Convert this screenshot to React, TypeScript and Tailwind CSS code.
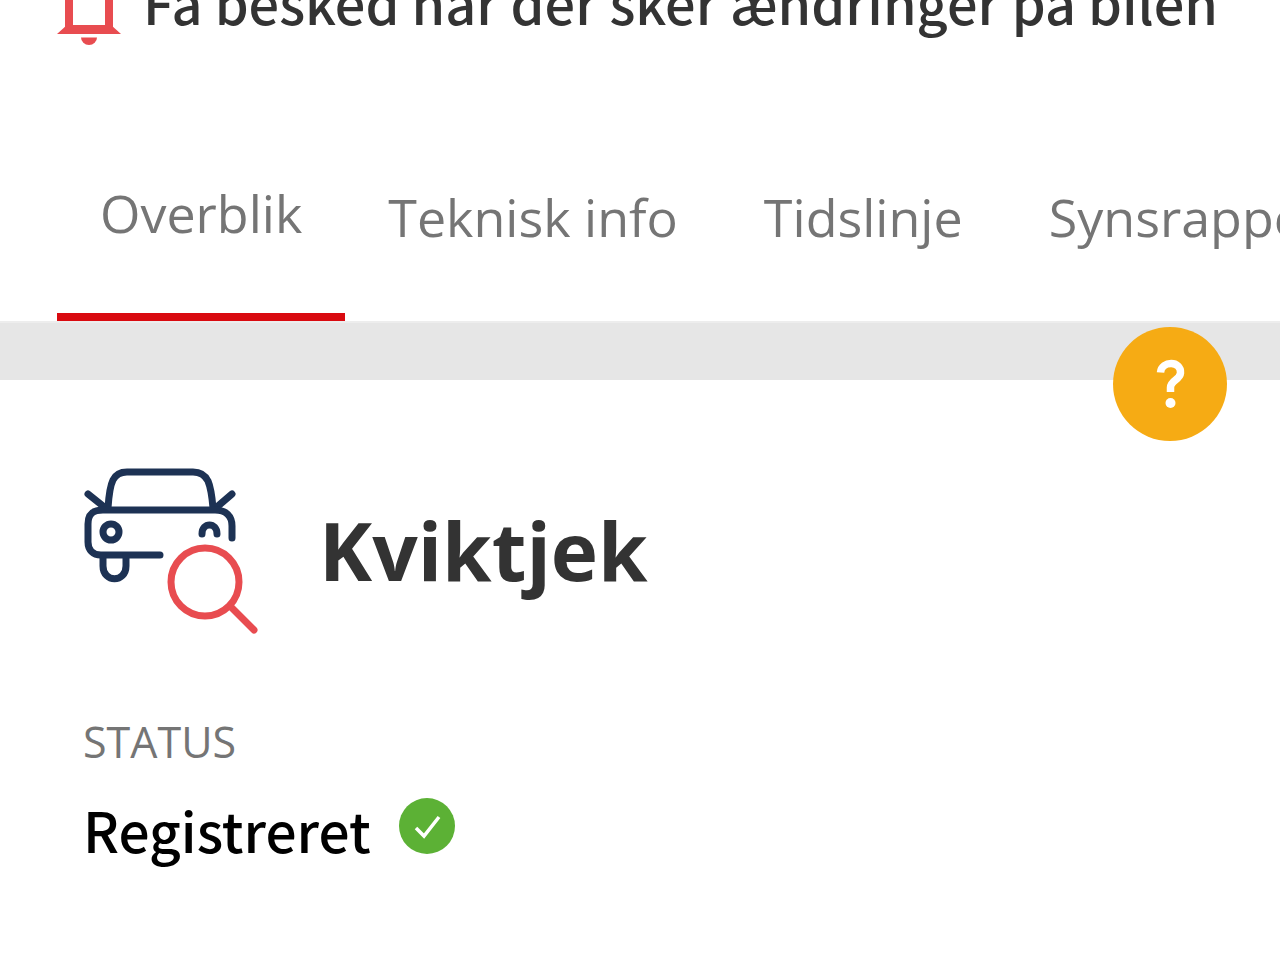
const tabs = ['Overblik', 'Teknisk info', 'Tidslinje', 'Synsrapporter'];

function BellIcon() {
  return (
    <svg className="h-[72px] w-16 shrink-0" viewBox="0 0 64 72" fill="none" aria-hidden="true">
      <path d="M12 54V24a20 20 0 0 1 40 0v30" stroke="#e84c50" strokeWidth="8" />
      <path d="M10 52h44l10 9H0z" fill="#e84c50" />
      <path d="M24 64.500h16a8 7.500 0 0 1-16 0z" fill="#e84c50" />
    </svg>
  );
}

function CarSearchIcon() {
  return (
    <svg className="h-[168px] w-44 shrink-0" viewBox="0 0 176 168" fill="none" strokeWidth="7" strokeLinecap="round" strokeLinejoin="round" aria-hidden="true">
      <g stroke="#1d3254">
        <path d="M25 42C26 27 27 20 30 14C33 8 38 6 44 6H110C117 6 122 9 125 15C128 22 129 30 130 42" />
        <path d="M5 28L20 40M149 28L135 40" />
        <path d="M77 89H18C10 89 5 84 5 76V58C5 48 10 44 20 44H132C143 44 149 50 149 60V72" />
        <circle cx="28" cy="66" r="8" />
        <path d="M119 68C119 56 134 56 134 68" />
        <path d="M20 90V100C20 117 43 117 43 100V90" />
      </g>
      <g stroke="#e84c50">
        <circle cx="122" cy="116" r="34" />
        <path d="M148 141L171 164" />
      </g>
    </svg>
  );
}

function CheckIcon() {
  return (
    <svg className="mb-1.5 size-14 shrink-0" viewBox="0 0 56 56" fill="none" role="img" aria-label="OK">
      <circle cx="28" cy="28" r="28" fill="#5cb135" />
      <path d="M17 30L25 38L40 19" stroke="#fff" strokeWidth="3.5" />
    </svg>
  );
}

function HelpButton() {
  return (
    <button type="button" aria-label="Hjælp" className="absolute top-1 right-[53px] flex size-[114px] items-center justify-center rounded-full bg-[#f6ab14]">
      <svg className="h-14 w-9" viewBox="0 0 36 56" fill="none" aria-hidden="true">
        <path d="M8.500 16.500C9.500 4.500 29.500 4.500 28.500 17C28 24 18.500 24 18.500 31.500V36" stroke="#fff" strokeWidth="7.500" />
        <circle cx="18.500" cy="47" r="5" fill="#fff" />
      </svg>
    </button>
  );
}

export default function App() {
  return (
    <div className="min-h-screen overflow-hidden bg-white font-['Open_Sans','Noto_Sans',sans-serif]">
      <header className="flex h-[45px] items-end gap-[22px] overflow-hidden pl-[57px]">
        <BellIcon />
        <p className="font-['Noto_Sans_CJK_JP','Noto_Sans',sans-serif] text-[54px] leading-[86px] font-medium whitespace-nowrap text-[#333]">
          Få besked når der sker ændringer på bilen
        </p>
      </header>

      <nav className="mt-[67px] flex h-[209px] pl-[57px]">
        {tabs.map((tab, i) => (
          <a
            key={tab}
            href="#"
            aria-current={i === 0 ? 'page' : undefined}
            className={`flex shrink-0 items-center px-[43px] text-[52px] leading-[76px] whitespace-nowrap text-[#757575] ${i === 0 ? 'border-b-8 border-[#d90a10]' : ''}`}
          >
            {tab}
          </a>
        ))}
      </nav>

      <div className="relative h-[59px] border-t-2 border-[#ededed] bg-[#e6e6e6]">
        <HelpButton />
      </div>

      <main className="px-[83px] pt-[86px]">
        <div className="flex items-center gap-[60px]">
          <CarSearchIcon />
          <h1 className="text-[80px] leading-[112px] font-bold text-[#333]">Kviktjek</h1>
        </div>
        <dl className="mt-[78px]">
          <dt className="text-[43px] leading-[60px] text-[#757575]">STATUS</dt>
          <dd className="mt-[19px] flex items-center gap-7 font-['Noto_Sans_CJK_JP','Noto_Sans',sans-serif] text-[55px] leading-[76px] font-medium text-black">
            Registreret
            <CheckIcon />
          </dd>
        </dl>
      </main>
    </div>
  );
}
